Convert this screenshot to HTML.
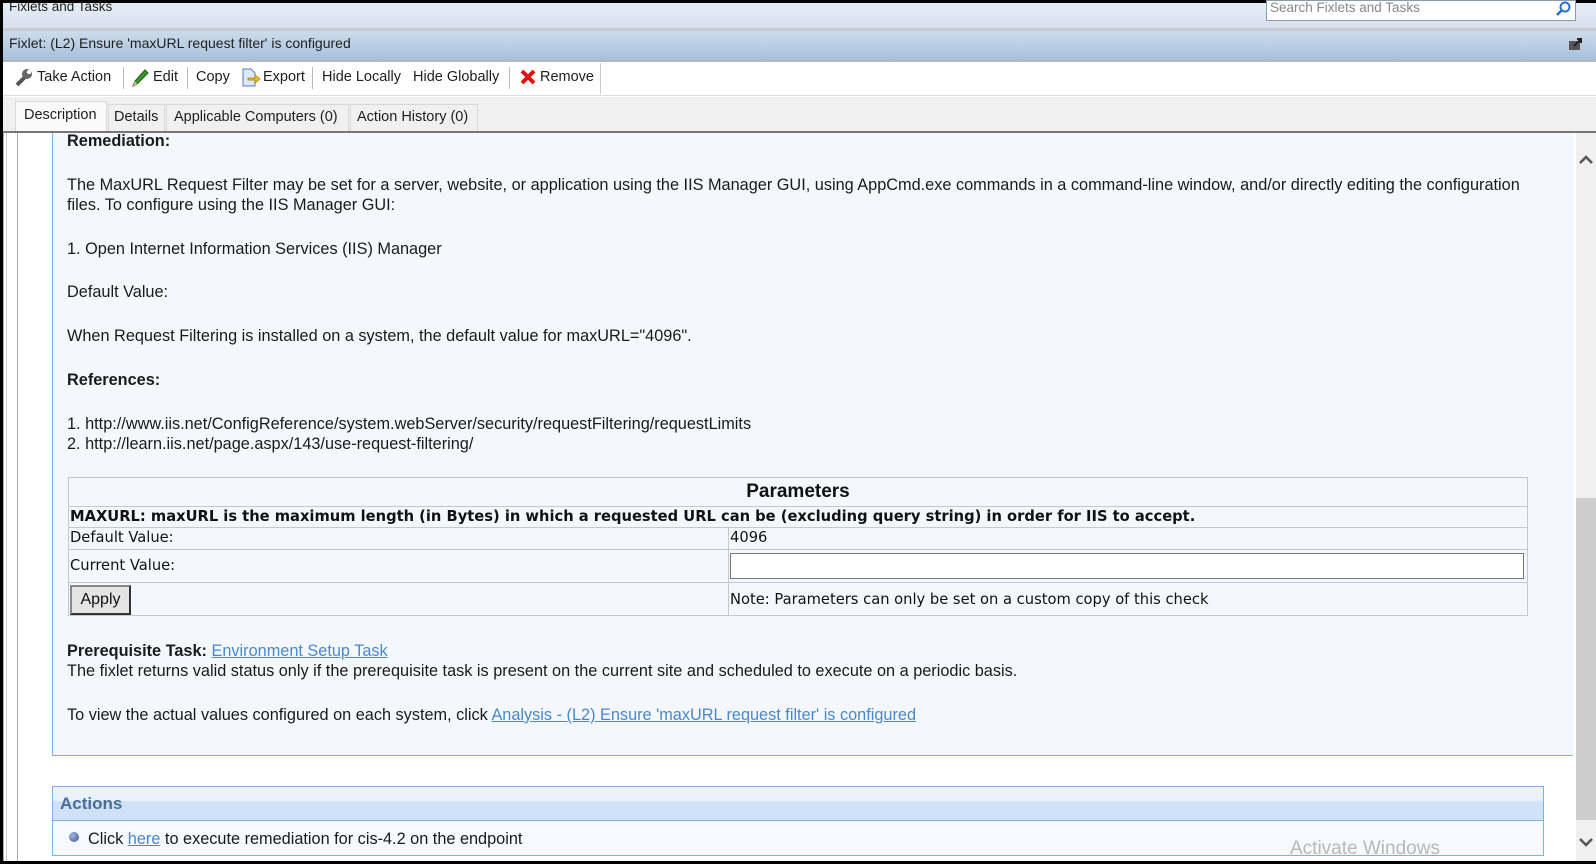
<!DOCTYPE html>
<html><head><meta charset="utf-8"><style>
*{box-sizing:border-box;margin:0;padding:0}
body{width:1596px;height:864px;overflow:hidden;background:#fff;font-family:"Liberation Sans",Arial,sans-serif;position:relative;color:#000}
.abs{position:absolute}
.ui{font-size:14.5px;color:#1e1e1e}
.c{font-size:16.3px;color:#1a1a1a;position:absolute;left:67px;white-space:nowrap}
a{color:#4a88cc;text-decoration:underline}
.tbl{position:absolute;left:68px;top:477px;width:1460px;border:1px solid #c8c8c8;font-family:"DejaVu Sans",Verdana,sans-serif;font-size:14.7px;color:#111}
.tbl div.row{position:absolute;left:0;right:0;border-top:1px solid #c8c8c8}
.tbl span{position:absolute}
.sep{position:absolute;top:5px;width:1px;height:22px;background:#bbb}
</style></head><body>
<div class="abs" style="left:0;top:0;width:1596px;height:3px;background:#000"></div>
<div class="abs" style="left:0;top:3px;width:1596px;height:25px;background:linear-gradient(#e6edf5,#d6e1ee)"></div>
<div class="abs ui" style="left:9px;top:-1px;font-size:13.5px">Fixlets and Tasks</div>
<div class="abs" style="left:1266px;top:0;width:310px;height:21px;background:#fff;border:1px solid #8a9ab0"></div>
<div class="abs ui" style="left:1270px;top:0px;font-size:13.5px;color:#888">Search Fixlets and Tasks</div>
<svg class="abs" style="left:1555px;top:1px" width="16" height="16"><circle cx="10" cy="6" r="4.5" fill="none" stroke="#2a6fd0" stroke-width="2"/><line x1="7" y1="9" x2="2" y2="14" stroke="#2a6fd0" stroke-width="2.5"/></svg>
<div class="abs" style="left:0;top:28px;width:1596px;height:3px;background:#c8ccd2"></div>
<div class="abs" style="left:0;top:31px;width:1596px;height:29px;background:linear-gradient(#cddcec,#a6c0dc)"></div>
<div class="abs ui" style="left:9px;top:35px;font-size:14px">Fixlet: (L2) Ensure 'maxURL request filter' is configured</div>
<svg class="abs" style="left:1568px;top:36px" width="16" height="16"><rect x="1" y="5" width="11" height="9" fill="#555"/><path d="M6 10 L13 3 M9 3 H13 V7" stroke="#222" stroke-width="2" fill="none"/></svg>
<div class="abs" style="left:0;top:60px;width:1596px;height:2px;background:#b8b8b8"></div>
<div class="abs" style="left:0;top:62px;width:1596px;height:34px;background:#fff;border-bottom:1px solid #ddd"></div>
<div class="abs" style="left:7px;top:63px;width:594px;height:31px;border-right:1px solid #ccc"></div>
<svg class="abs" style="left:14px;top:68px" width="20" height="20"><path d="M3 17 L11 9" stroke="#555" stroke-width="4"/><circle cx="13" cy="6" r="5" fill="#666"/><circle cx="15" cy="4" r="2.2" fill="#fff"/></svg>
<div class="abs ui" style="left:37px;top:69px">Take Action</div>
<div class="sep" style="left:123px;top:67px"></div>
<svg class="abs" style="left:131px;top:68px" width="18" height="20"><path d="M2 18 L4 13 L14 2 L17 5 L6 16 Z" fill="#3a9a2a" stroke="#1d5a14"/><path d="M2 18 L4 13 L6 16Z" fill="#e8c080"/></svg>
<div class="abs ui" style="left:153px;top:69px">Edit</div>
<div class="sep" style="left:187px;top:67px"></div>
<div class="abs ui" style="left:196px;top:69px">Copy</div>
<svg class="abs" style="left:240px;top:67px" width="22" height="22"><path d="M3 2 H11 L15 6 V19 H3Z" fill="#dde8fa" stroke="#5a7ac0"/><path d="M8 11 H15 V8 L20 12 L15 16 V13 H8Z" fill="#f0c020" stroke="#a07a00" stroke-width=".7"/></svg>
<div class="abs ui" style="left:263px;top:69px">Export</div>
<div class="sep" style="left:312px;top:67px"></div>
<div class="abs ui" style="left:322px;top:69px">Hide Locally</div>
<div class="abs ui" style="left:413px;top:69px">Hide Globally</div>
<div class="sep" style="left:509px;top:67px"></div>
<svg class="abs" style="left:519px;top:68px" width="18" height="18"><path d="M3 3 L15 15 M15 3 L3 15" stroke="#e01010" stroke-width="4"/></svg>
<div class="abs ui" style="left:540px;top:69px">Remove</div>
<div class="abs" style="left:0;top:97px;width:1596px;height:35px;background:#f0f0f0"></div>
<div class="abs" style="left:15px;top:101px;width:92px;height:31px;background:#fafafa;border:1px solid #d8d8d8;border-bottom:none"></div>
<div class="abs ui" style="left:24px;top:107px">Description</div>
<div class="abs" style="left:108px;top:104px;width:57px;height:28px;border:1px solid #d8d8d8;border-bottom:none"></div>
<div class="abs ui" style="left:114px;top:109px">Details</div>
<div class="abs" style="left:166px;top:104px;width:183px;height:28px;border:1px solid #d8d8d8;border-bottom:none"></div>
<div class="abs ui" style="left:174px;top:109px">Applicable Computers (0)</div>
<div class="abs" style="left:350px;top:104px;width:128px;height:28px;border:1px solid #d8d8d8;border-bottom:none"></div>
<div class="abs ui" style="left:357px;top:109px">Action History (0)</div>
<div class="abs" style="left:0;top:131px;width:1596px;height:2px;background:#777"></div>
<div class="abs" style="left:0;top:0;width:3px;height:864px;background:#000"></div>
<div class="abs" style="left:3px;top:133px;width:15px;height:730px;background:#fff;border-left:1px solid #aaa;border-right:1px solid #aaa"></div>
<div class="abs" style="left:6px;top:133px;width:1px;height:730px;background:#ccc"></div>
<div class="abs" style="left:19px;top:133px;width:1557px;height:730px;background:#fff"></div>
<div class="abs" style="left:52px;top:133px;width:1521px;height:623px;background:#f4f8fe;border-left:1px solid #7fb2e4;border-bottom:1px solid #7fb2e4"></div>
<div class="c" style="top:132px;font-weight:bold">Remediation:</div>
<div class="c" style="top:176px">The MaxURL Request Filter may be set for a server, website, or application using the IIS Manager GUI, using AppCmd.exe commands in a command-line window, and/or directly editing the configuration</div>
<div class="c" style="top:196px">files. To configure using the IIS Manager GUI:</div>
<div class="c" style="top:240px">1. Open Internet Information Services (IIS) Manager</div>
<div class="c" style="top:283px">Default Value:</div>
<div class="c" style="top:327px">When Request Filtering is installed on a system, the default value for maxURL="4096".</div>
<div class="c" style="top:371px;font-weight:bold">References:</div>
<div class="c" style="top:415px">1. http://www.iis.net/ConfigReference/system.webServer/security/requestFiltering/requestLimits</div>
<div class="c" style="top:435px">2. http://learn.iis.net/page.aspx/143/use-request-filtering/</div>
<div class="tbl" style="height:139px">
 <span style="left:0;right:0;top:3px;text-align:center;font-family:'Liberation Sans',Arial,sans-serif;font-weight:bold;font-size:19px">Parameters</span>
 <div class="row" style="top:28px;height:21px"><span style="left:1px;top:1px;font-weight:bold;white-space:nowrap">MAXURL: maxURL is the maximum length (in Bytes) in which a requested URL can be (excluding query string) in order for IIS to accept.</span></div>
 <div class="row" style="top:49px;height:22px"><span style="left:1px;top:1px">Default Value:</span><span style="left:661px;top:1px">4096</span></div>
 <div class="row" style="top:71px;height:33px"><span style="left:1px;top:7px">Current Value:</span><span style="left:661px;top:3px;width:794px;height:26px;background:#fff;border:1px solid #777"></span></div>
 <div class="row" style="top:104px;height:34px"><span style="left:1px;top:2px;width:61px;height:30px;background:#e4e4e4;border:2px solid #555;border-color:#888 #333 #333 #888;text-align:center;line-height:26px;font-family:'Liberation Sans',Arial,sans-serif;font-size:16px">Apply</span><span style="left:661px;top:8px">Note: Parameters can only be set on a custom copy of this check</span></div>
 <div class="abs" style="left:659px;top:49px;width:1px;height:89px;background:#c8c8c8"></div>
</div>
<div class="c" style="top:642px"><b>Prerequisite Task:</b> <a>Environment Setup Task</a></div>
<div class="c" style="top:662px">The fixlet returns valid status only if the prerequisite task is present on the current site and scheduled to execute on a periodic basis.</div>
<div class="c" style="top:706px">To view the actual values configured on each system, click <a>Analysis - (L2) Ensure 'maxURL request filter' is configured</a></div>
<div class="abs" style="left:52px;top:786px;width:1492px;height:70px;border:1px solid #7fb2e4;background:#f6f9fe"></div>
<div class="abs" style="left:53px;top:787px;width:1490px;height:34px;background:linear-gradient(#eaf2fc 40%,#cfe2f8 45%,#cfe2f8);border-bottom:1px solid #7fb2e4"></div>
<div class="abs" style="left:60px;top:794px;font-size:17px;font-weight:bold;color:#4a6e96">Actions</div>
<div class="abs" style="left:69px;top:832px;width:10px;height:10px;border-radius:50%;background:radial-gradient(circle at 35% 35%,#a0b8e0,#3a5a90)"></div>
<div class="c" style="left:88px;top:830px">Click <a>here</a> to execute remediation for cis-4.2 on the endpoint</div>
<div class="abs" style="left:1290px;top:838px;font-size:19px;color:#b8b8b8">Activate Windows</div>
<div class="abs" style="left:1576px;top:133px;width:20px;height:730px;background:#f0f0f0"></div>
<div class="abs" style="left:1576px;top:498px;width:20px;height:322px;background:#cdcdcd"></div>
<svg class="abs" style="left:1578px;top:154px" width="16" height="12"><path d="M2 9 L8 3 L14 9" stroke="#555" stroke-width="2.5" fill="none"/></svg>
<svg class="abs" style="left:1578px;top:836px" width="16" height="12"><path d="M2 3 L8 9 L14 3" stroke="#555" stroke-width="2.5" fill="none"/></svg>
<div class="abs" style="left:0;top:861px;width:1596px;height:3px;background:#000"></div>
</body></html>
